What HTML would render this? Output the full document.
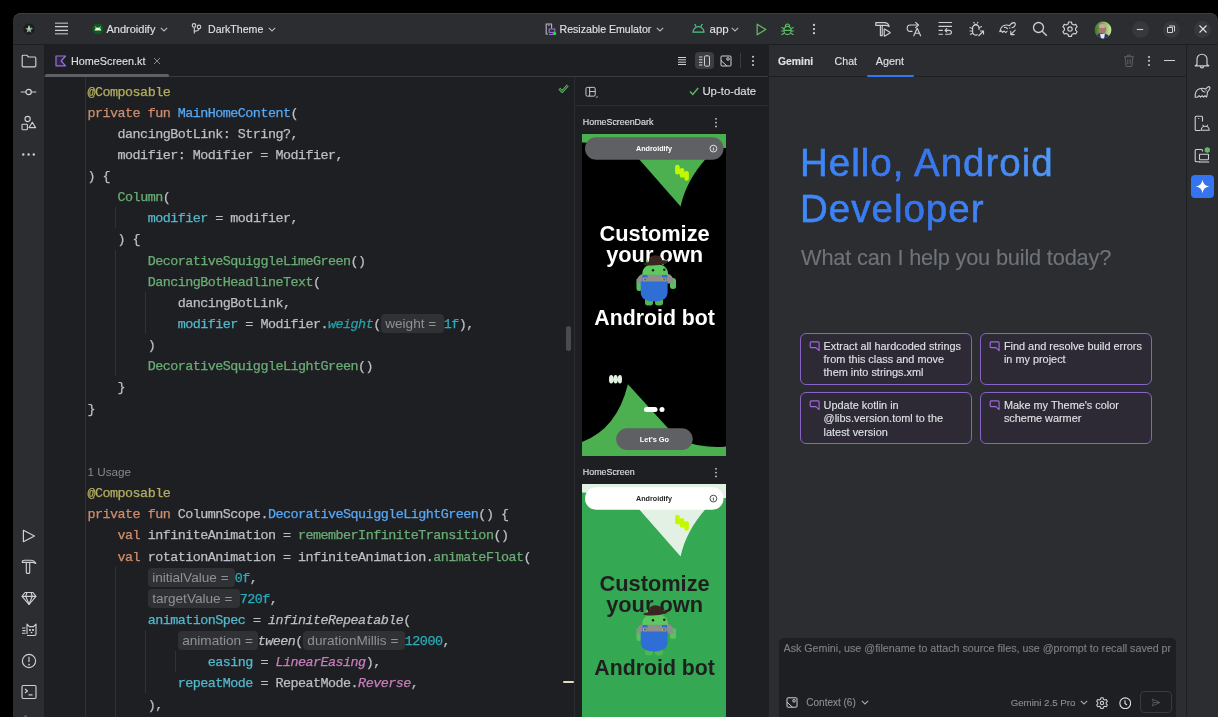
<!DOCTYPE html>
<html><head><meta charset="utf-8">
<style>
*{box-sizing:border-box;margin:0;padding:0}
html,body{width:1218px;height:717px;overflow:hidden;background:#000}
body{will-change:transform}
body{font-family:"Liberation Sans",sans-serif;color:#DFE1E5;position:relative}
div,span,svg{position:absolute}
span{position:static}
.ln span, .t span{position:static}
#win{left:13px;top:13px;width:1205px;height:704px;background:#2B2D30;border-radius:8px 8px 0 0;overflow:hidden;box-shadow:inset 0 1px 0 #3A3C40}
#tabs{left:44px;top:44px;width:724px;height:32px;background:#1E1F22}
#tabline{left:44px;top:76px;width:724px;height:1px;background:#393B40}
#code{left:44px;top:77px;width:530px;height:640px;background:#1E1F22}
#prev{left:574px;top:77px;width:194px;height:640px;background:#1E1F22;border-left:1px solid #393B40}
#gemsep{left:768px;top:44px;width:1px;height:673px;background:#1E1F22}
#rsep{left:1186px;top:44px;width:1px;height:673px;background:#1E1F22}
.ln{left:0;width:574px;height:21px;white-space:pre;font-family:"Liberation Mono",monospace;font-size:13.4px;letter-spacing:-0.52px;line-height:21px;color:#BCBEC4;padding-left:87.5px;-webkit-text-stroke:0.25px}
.kw{color:#CF8E6D}.an{color:#B3AE60}.fd{color:#56A8F5}.cp{color:#69AC74}.na{color:#53B7CD}.nu{color:#2AACB8}.it{font-style:italic}.pu{color:#C77DBB}.tl{color:#20A4A8}
.hint{display:inline-block;position:relative !important;font-family:"Liberation Sans",sans-serif;font-size:13.6px;letter-spacing:0;-webkit-text-stroke:0;color:#8E9196;background:#303135;border-radius:4px;padding:0 0 0 4.5px;line-height:19px;height:19.2px;vertical-align:top;margin-top:-.2px;overflow:hidden}
.usage{display:inline-block;transform:translateY(-0.9px);font-family:"Liberation Sans",sans-serif;font-size:11.7px;letter-spacing:0;-webkit-text-stroke:0;color:#868A91}
.ig{width:1px;background:#313235}
.t{white-space:nowrap;-webkit-text-stroke:0.12px}
.card{border:1.3px solid #8862C4;border-radius:6px;background:#2E2A35}
.ct{white-space:nowrap;font-size:10.9px;line-height:13.4px;color:#DFE1E5;-webkit-text-stroke:0.12px}

</style></head><body>
<div id="win"></div>
<div id="tline" style="left:13px;top:44px;width:1205px;height:1px;background:#1E1F22"></div>
<div id="tabs"></div>
<div id="tabline"></div>
<div id="code"></div>
<div id="prev"></div>
<div id="gemsep"></div>
<div id="rsep"></div>
<!-- title bar -->
<svg style="left:23px;top:23px" width="12" height="12" viewBox="0 0 12 12"><circle cx="6" cy="6" r="5.6" fill="#1B1C1E"/><path d="M6 2 L7 5 L9.8 5.2 L7.6 7 L8.5 9.8 L6 8.2 L3.5 9.8 L4.4 7 L2.2 5.2 L5 5z" fill="#9EA1A6"/><path d="M6 2 L7 5 L6 8.2 L5 5z" fill="#C8CACE"/><circle cx="8.3" cy="5.6" r="1.15" fill="#2ECC55"/></svg>
<svg style="left:54px;top:22px" width="15" height="13" viewBox="0 0 15 13"><g stroke="#CED0D6" stroke-width="1.3"><path d="M1 1.2H14" stroke="#A8ABB0"/><path d="M1 4.6H14"/><path d="M1 8.4H14"/><path d="M1 11.8H14" stroke="#A8ABB0"/></g></svg>
<svg style="left:91.5px;top:22.5px" width="12" height="12" viewBox="0 0 12 12"><path d="M6 0.3l1.6 1 1.9-.1.6 1.8 1.5 1.2-.6 1.8.6 1.8-1.5 1.2-.6 1.8-1.9-.1-1.6 1-1.6-1-1.9.1-.6-1.8L.3 7.8l.6-1.8L.3 4.2l1.5-1.2.6-1.8 1.9.1z" fill="#0D5C1C"/><path d="M2.7 7.6Q2.9 4.6 5.9 4.4 8.9 4.6 9.1 7.6z" fill="#EAF5D5"/><path d="M3.3 3.6L4.3 5M8.5 3.6L7.5 5" stroke="#EAF5D5" stroke-width=".9"/></svg>
<div class="t" style="left:106.5px;top:22px;font-size:11px;color:#DFE1E5;line-height:14px">Androidify</div>
<svg style="left:160px;top:26.8px" width="8" height="5" viewBox="0 0 8 5"><path d="M.8.8L4 4 7.2.8" fill="none" stroke="#B6B9BE" stroke-width="1.1"/></svg>
<svg style="left:191px;top:22px" width="12" height="13" viewBox="0 0 12 13"><g fill="none" stroke="#CED0D6" stroke-width="1.1"><circle cx="3" cy="3.4" r="1.75"/><circle cx="8" cy="4.9" r="1.75"/><path d="M3.3 5.2V11.6M8 6.7Q8 8.9 3.5 9.1"/></g></svg>
<div class="t" style="left:208px;top:22px;font-size:10.6px;color:#DFE1E5;line-height:14px">DarkTheme</div>
<svg style="left:268px;top:26.8px" width="8" height="5" viewBox="0 0 8 5"><path d="M.8.8L4 4 7.2.8" fill="none" stroke="#B6B9BE" stroke-width="1.1"/></svg>

<svg style="left:545px;top:22px" width="12" height="14" viewBox="0 0 12 14"><g fill="none" stroke-width="1.1"><path d="M3 12H1.2V2H6.6V6.5" stroke="#B6B9BE"/><path d="M3 3.3h1.6" stroke="#B6B9BE"/><rect x="4.2" y="7" width="5.6" height="3.4" stroke="#9C6FDC"/><path d="M4 12.5h4" stroke="#9C6FDC"/></g><circle cx="9.6" cy="11.6" r="1.7" fill="#22E03A"/></svg>
<div class="t" style="left:559.5px;top:22px;font-size:10.6px;color:#DFE1E5;line-height:14px">Resizable Emulator</div>
<svg style="left:656px;top:26.8px" width="8" height="5" viewBox="0 0 8 5"><path d="M.8.8L4 4 7.2.8" fill="none" stroke="#B6B9BE" stroke-width="1.1"/></svg>
<svg style="left:692px;top:23px" width="13" height="10" viewBox="0 0 13 10"><g fill="none" stroke="#4FC582" stroke-width="1.2"><path d="M1 9.2a5.5 5.5 0 0 1 11 0z"/><path d="M2.6 1l1.6 2.6M10.4 1L8.8 3.6"/></g></svg>
<div class="t" style="left:709.5px;top:22px;font-size:11.5px;color:#DFE1E5;line-height:14px">app</div>
<svg style="left:731.3px;top:27.3px" width="8" height="5" viewBox="0 0 8 5"><path d="M.8.8L4 4 7.2.8" fill="none" stroke="#B6B9BE" stroke-width="1.1"/></svg>
<svg style="left:756px;top:22.6px" width="11" height="13" viewBox="0 0 11 13"><path d="M1.2 1.2L9.8 6.5 1.2 11.8z" fill="none" stroke="#5FB865" stroke-width="1.3" stroke-linejoin="round"/></svg>
<svg style="left:781px;top:22.5px" width="13" height="12.5" viewBox="0 0 13 12.5"><g fill="none" stroke="#5FB865" stroke-width="1.15" stroke-linecap="round"><ellipse cx="6.5" cy="7.5" rx="3.6" ry="4.1"/><path d="M4.3 3.6Q4.5 1 6.5 1 8.5 1 8.7 3.6"/><path d="M.8 4.5l2.2 1.2M12.2 4.5L10 5.7M.6 8h2.3M12.4 8h-2.3M.9 11.6l2.3-1.4M12.1 11.6l-2.3-1.4M2.9 7.4h7.2"/></g></svg>
<svg style="left:812.3px;top:22px" width="4" height="14" viewBox="0 0 4 14"><g fill="#CED0D6"><circle cx="2" cy="2.9" r="1.1"/><circle cx="2" cy="7.1" r="1.1"/><circle cx="2" cy="11.2" r="1.1"/></g></svg>

<svg style="left:875px;top:21px" width="17" height="17" viewBox="0 0 17 17"><g fill="none" stroke="#CED0D6" stroke-width="1.15" stroke-linejoin="round"><path d="M0.8 1.6H9.5Q13 1.6 14.2 5.4 12.5 4.4 10.5 4.4H0.8z"/><path d="M5.4 4.6V14.6H7.2V4.6"/><path d="M9.2 8.6q0-.8.7-.4l5 3q.7.4 0 .8l-5 3q-.7.4-.7-.4z"/></g></svg>
<svg style="left:906px;top:21px" width="16" height="16" viewBox="0 0 16 16"><g fill="none" stroke="#CED0D6" stroke-width="1.15" stroke-linejoin="round" stroke-linecap="round"><path d="M6 10.4H4.2Q1.2 10.4 1.2 7.2 1.2 4 4.2 4H12.2"/><path d="M9.6 1.4L12.4 4 9.6 6.6"/><path d="M7.8 14.8L11.2 7.2 14.6 14.8M9 12.2H13.4"/></g></svg>
<svg style="left:937px;top:21px" width="16" height="16" viewBox="0 0 16 16"><g fill="none" stroke="#CED0D6" stroke-width="1.15" stroke-linejoin="round" stroke-linecap="round"><path d="M2 1.5H14.5M2 5.4H14.5M2 9.3H5.5M2 13.2H5.5"/><path d="M8.2 9.3H12.2Q14.4 9.3 14.4 11.25 14.4 13.2 12.2 13.2H8.6"/><path d="M9.8 7.6L8.1 9.3 9.8 11"/></g></svg>
<svg style="left:969px;top:21px" width="16" height="16" viewBox="0 0 16 16"><g fill="none" stroke="#CED0D6" stroke-width="1.15"><path d="M10 9V7a3.2 3.2 0 0 0-6.4 0v4a3.2 3.2 0 0 0 5 2.6"/><path d="M5 4.5Q6.8 2 8.6 4.5M5.5 2.5L4.5 1M8.1 2.5L9.1 1"/><path d="M.6 6.5l3 1M.6 10h3M1 13.5l2.7-1.3M10 6.5l3-1"/><path d="M9.5 15l5-5M11 10h3.5v3.5"/></g></svg>
<svg style="left:999px;top:21px" width="18" height="16" viewBox="0 0 18 16"><g fill="none" stroke="#CED0D6" stroke-width="1.1" stroke-linejoin="round" stroke-linecap="round"><path d="M1 10.6Q1.5 6 5 4.5 8 3.5 10.5 4.8 12.5 1.5 15 1.6 17 2.2 16 4.5 15.2 6.4 13 6.8"/><path d="M1 10.6L2.4 9.8 3.6 11.4 5.2 10 6.6 11.6 8 10.4"/><path d="M5.5 6.5Q7.5 6 8.5 7.8M10.8 6.8v.5"/><path d="M16.2 9.2L11.8 13.6M11.8 10.2V13.6H15.2"/></g></svg>
<svg style="left:1032px;top:21px" width="16" height="16" viewBox="0 0 16 16"><g fill="none" stroke="#CED0D6" stroke-width="1.3"><circle cx="6.5" cy="6.5" r="5"/><path d="M10.2 10.2L14.8 14.8"/></g></svg>
<svg style="left:1062px;top:21px" width="16" height="16" viewBox="0 0 16 16"><g fill="none" stroke="#CED0D6" stroke-width="1.15" stroke-linejoin="round"><path d="M6.6 1h2.8l.5 2 1.8 1 2-.6 1.4 2.4-1.5 1.4v2l1.5 1.4-1.4 2.4-2-.6-1.8 1-.5 2H6.6l-.5-2-1.8-1-2 .6L.9 10.6l1.5-1.4v-2L.9 5.8l1.4-2.4 2 .6 1.8-1z"/><circle cx="8" cy="8" r="2.2"/></g></svg>
<svg style="left:1094px;top:20.5px" width="18" height="18" viewBox="0 0 18 18"><defs><clipPath id="av"><circle cx="9" cy="9" r="8.4"/></clipPath><linearGradient id="avg" x1="0" x2="1"><stop offset="0" stop-color="#3F6E28"/><stop offset=".6" stop-color="#8DBB60"/><stop offset="1" stop-color="#D2EAA8"/></linearGradient></defs><g clip-path="url(#av)"><rect width="18" height="18" fill="url(#avg)"/><ellipse cx="8.4" cy="8.6" rx="3.8" ry="5" fill="#A8786A"/><ellipse cx="8.4" cy="5" rx="3.4" ry="2" fill="#C9A8A8"/><path d="M1.5 18l2.5-5q2.5-1.5 4.5-.5l1 5.5z" fill="#2A3370"/><path d="M9.5 18l.5-5.5q3 0 5 2.5l1 3z" fill="#2A3370"/><path d="M6 12.6q2.5 1 5 0l-1 5.4h-3z" fill="#E0E8F0"/></g></svg>
<div style="left:1131.5px;top:20.5px;width:17px;height:17px;border-radius:50%;background:#36383C"></div>
<svg style="left:1135px;top:24px" width="10" height="10" viewBox="0 0 10 10"><path d="M1.8 5.5h6.4" stroke="#CED0D6" stroke-width="1.1"/></svg>
<div style="left:1162.5px;top:20.5px;width:17px;height:17px;border-radius:50%;background:#36383C"></div>
<svg style="left:1166px;top:24px" width="10" height="10" viewBox="0 0 10 10"><g fill="none" stroke="#CED0D6" stroke-width="1"><path d="M1.5 3.5h5v5h-5z"/><path d="M3 2h5.5v5.5"/></g></svg>
<div style="left:1194px;top:20.5px;width:17px;height:17px;border-radius:50%;background:#36383C"></div>
<svg style="left:1197.5px;top:24px" width="10" height="10" viewBox="0 0 10 10"><path d="M1.5 1.5l7 7M8.5 1.5l-7 7" stroke="#DFE1E5" stroke-width="1.1"/></svg>

<!-- tab row -->
<svg style="left:55px;top:55px" width="12" height="12" viewBox="0 0 12 12"><path d="M1 1h9.5L6.2 6l4.3 4.8H1z" fill="#2C2640" stroke="#9B6FE0" stroke-width="1.2" stroke-linejoin="round"/></svg>
<div class="t" style="left:71px;top:54px;font-size:10.8px;color:#DFE1E5;line-height:14px;-webkit-text-stroke:0.1px #DFE1E5">HomeScreen.kt</div>
<svg style="left:153px;top:56.5px" width="8" height="8" viewBox="0 0 8 8"><path d="M1 1l6 6M7 1L1 7" stroke="#868A91" stroke-width="1"/></svg>
<div style="left:45px;top:74.2px;width:124px;height:3px;border-radius:2px;background:#5E6065"></div>
<svg style="left:677px;top:56px" width="10" height="10" viewBox="0 0 10 10"><g stroke="#CED0D6" stroke-width="1"><path d="M1 1.5h8M1 3.8h8M1 6.2h8M1 8.5h8"/></g></svg>
<div style="left:695px;top:52px;width:19px;height:17px;border-radius:4px;background:#3C3E42"></div>
<svg style="left:698px;top:55px" width="13" height="12" viewBox="0 0 13 12"><g fill="none" stroke="#CED0D6" stroke-width="1"><path d="M1 2h3.5M1 4.7h3.5M1 7.3h3.5M1 10h3.5"/><rect x="6.5" y="0.8" width="5" height="10.4" rx="1.3"/></g></svg>
<svg style="left:720px;top:55px" width="12" height="12" viewBox="0 0 12 12"><g fill="none" stroke="#CED0D6" stroke-width="1"><rect x="1" y="1" width="10" height="10" rx="1"/><path d="M1 5.5L7 11"/><circle cx="8" cy="4" r="1.3"/></g></svg>
<div style="left:740px;top:53px;width:1px;height:15px;background:#393B40"></div>
<svg style="left:751px;top:55px" width="4" height="12" viewBox="0 0 4 12"><g fill="#CED0D6"><circle cx="2" cy="1.7" r="1"/><circle cx="2" cy="5.9" r="1"/><circle cx="2" cy="10" r="1"/></g></svg>

<!-- left strip -->
<svg style="left:21px;top:54px" width="16" height="14" viewBox="0 0 16 14"><path d="M1.2 2.2q0-1 1-1h3.6l1.6 1.8h6.4q1 0 1 1v7.8q0 1-1 1H2.2q-1 0-1-1z" fill="none" stroke="#CED0D6" stroke-width="1.15" stroke-linejoin="round"/></svg>
<svg style="left:20px;top:86px" width="17" height="12" viewBox="0 0 17 12"><g fill="none" stroke="#CED0D6" stroke-width="1.2"><circle cx="8.6" cy="6" r="2.7"/><path d="M.8 6h5.1M11.3 6h5"/></g></svg>
<svg style="left:21px;top:115px" width="16" height="16" viewBox="0 0 16 16"><g fill="none" stroke="#CED0D6" stroke-width="1.1" stroke-linejoin="round"><circle cx="6.6" cy="4" r="2.6"/><rect x="1" y="9.3" width="5.4" height="5.4" rx=".8"/><path d="M11.3 7.2l3.3 5.4H8z"/></g></svg>
<svg style="left:21px;top:152px" width="16" height="5" viewBox="0 0 16 5"><g fill="#CED0D6"><circle cx="2.3" cy="2.5" r="1.2"/><circle cx="7.6" cy="2.5" r="1.2"/><circle cx="12.8" cy="2.5" r="1.2"/></g></svg>

<svg style="left:21px;top:529px" width="16" height="14" viewBox="0 0 16 14"><path d="M2.4 1.3L13.5 7 2.4 12.7z" fill="none" stroke="#CED0D6" stroke-width="1.2" stroke-linejoin="round"/></svg>
<svg style="left:21px;top:559px" width="16" height="16" viewBox="0 0 16 16"><g fill="none" stroke="#CED0D6" stroke-width="1.15" stroke-linejoin="round"><path d="M1.3 3.2q0-2 2-2h6.5q3.5 0 5 3.2-1.8-1-3.6-1H1.3z"/><path d="M5.3 3.4v10.2q0 .8.8.8h1.8q.8 0 .8-.8V3.4"/></g></svg>
<svg style="left:21px;top:591px" width="16" height="15" viewBox="0 0 16 15"><g fill="none" stroke="#CED0D6" stroke-width="1.15" stroke-linejoin="round"><path d="M4 1.5h8l3 3.8-7 8.2-7-8.2z"/><path d="M1 5.3h14M5.8 1.5L4.8 5.3 8 13.5l3.2-8.2-1-3.8"/></g></svg>
<svg style="left:21px;top:622px" width="16" height="15" viewBox="0 0 16 15"><g fill="none" stroke="#CED0D6" stroke-width="1.1" stroke-linejoin="round"><path d="M6 13.5h7.5q1.5 0 1.5-1.5V2l-2.4 2.6H8.4L6 2v10"/><path d="M1 6h3.5M1.5 8.6H4.5M1 11.2h3.5"/><circle cx="9" cy="8" r=".5" fill="#CED0D6"/><circle cx="12" cy="8" r=".5" fill="#CED0D6"/><path d="M9.8 10.2l.7.6.7-.6"/></g></svg>
<svg style="left:21px;top:653px" width="16" height="16" viewBox="0 0 16 16"><g fill="none" stroke="#CED0D6" stroke-width="1.15"><circle cx="8" cy="8" r="6.6"/><path d="M8 3.8v5.3"/></g><circle cx="8" cy="11.6" r=".9" fill="#CED0D6"/></svg>
<svg style="left:21px;top:684px" width="16" height="16" viewBox="0 0 16 16"><g fill="none" stroke="#CED0D6" stroke-width="1.15" stroke-linejoin="round"><rect x="1" y="1.5" width="14" height="13" rx="1.2"/><path d="M4 5l2.5 2L4 9M7.5 10.8h4"/></g></svg>

<!-- right strip -->
<svg style="left:1194px;top:52px" width="16" height="17" viewBox="0 0 16 17"><g fill="none" stroke="#CED0D6" stroke-width="1.15" stroke-linejoin="round"><path d="M3 12.6V7.2a5 5 0 0 1 10 0v5.4l1.8 1.2H1.2z"/><path d="M6.4 14.3a1.6 1.6 0 0 0 3.2 0"/></g></svg>
<svg style="left:1194px;top:85px" width="17" height="14" viewBox="0 0 17 14"><g fill="none" stroke="#CED0D6" stroke-width="1.1" stroke-linejoin="round" stroke-linecap="round"><path d="M1.2 12.2Q.6 5.6 5.6 3.8 9 2.6 11.6 4.2L13.6 2.2Q15.4 .9 15.9 2.6 16.2 4.4 14.6 5.4 13.2 6.6 13.2 9.5L12.6 12.2 11 10.6 9.6 12.2 8.1 10.7 6.6 12.2 5.1 10.7 3.4 12.2z"/><path d="M7.6 4.4Q8.4 7 11 7"/></g><circle cx="12.2" cy="5.6" r=".55" fill="#CED0D6"/></svg>
<svg style="left:1194px;top:115px" width="16" height="17" viewBox="0 0 16 17"><g fill="none" stroke="#CED0D6" stroke-width="1.1" stroke-linejoin="round"><path d="M6.5 15.5H2.2q-1 0-1-1V2.2q0-1 1-1h5.3q1 0 1 1v4.3"/><path d="M4.2 3.5h1"/><path d="M7.2 15.3a4 4 0 0 1 8 0z"/><path d="M8.6 9.8l1 1.4M13.8 9.8l-1 1.4"/></g></svg>
<svg style="left:1194px;top:146px" width="17" height="18" viewBox="0 0 17 18"><g fill="none" stroke="#CED0D6" stroke-width="1.1" stroke-linejoin="round"><path d="M6 15.8H2.2q-1 0-1-1V4.5q0-1 1-1h5.3q1 0 1 1v1"/><rect x="5.5" y="8.2" width="9" height="5.5" rx=".6"/><path d="M5 16h10.2"/></g><circle cx="13.3" cy="4" r="2.7" fill="#5FB865"/></svg>
<div style="left:1191px;top:174.5px;width:23px;height:23px;border-radius:4px;background:#3574F0"></div>
<svg style="left:1195px;top:178.5px" width="15" height="15" viewBox="0 0 15 15"><path d="M7.5 0.8Q8.3 6.7 14.2 7.5 8.3 8.3 7.5 14.2 6.7 8.3 0.8 7.5 6.7 6.7 7.5 0.8z" fill="#fff"/></svg>

<svg style="left:23px;top:713px" width="5" height="4" viewBox="0 0 5 4"><circle cx="2.5" cy="3.5" r="1.6" fill="#55585D"/></svg>

<!-- indent guides -->
<div class="ig" style="left:85px;top:77px;height:640px"></div>
<div class="ig" style="left:115px;top:207.3px;height:21.1px"></div>
<div class="ig" style="left:115px;top:249.6px;height:126.8px"></div>
<div class="ig" style="left:145px;top:291.9px;height:42.3px"></div>
<div class="ig" style="left:115px;top:566.5px;height:151px"></div>
<div class="ig" style="left:145px;top:629.9px;height:63.4px"></div>
<div class="ig" style="left:175px;top:651px;height:21.1px"></div>
<!-- check -->
<svg style="left:558px;top:84px" width="11" height="9" viewBox="0 0 11 9"><path d="M1.3 4.6l2.9 3L9.8 1.4" fill="none" stroke="#5FB865" stroke-width="2.6" stroke-linejoin="miter"/><path d="M1.3 4.6l2.9 3L9.8 1.4" fill="none" stroke="#1E1F22" stroke-width="0.9"/></svg>
<!-- scrollbar -->
<div style="left:566px;top:326.3px;width:5px;height:24.7px;border-radius:3px;background:#4A4B4F"></div>
<div style="left:563px;top:681px;width:11px;height:2px;border-radius:1px;background:#E5DAC0"></div>

<!-- preview panel -->
<div style="left:574px;top:77px;width:1px;height:640px;background:#2B2D30"></div>
<div style="left:575px;top:104.5px;width:193px;height:1px;background:#2B2D30"></div>
<svg style="left:584.5px;top:85.5px" width="13" height="12" viewBox="0 0 14 13"><g fill="none" stroke="#CED0D6" stroke-width="1.05"><rect x="1" y="1.5" width="10" height="9.5" rx="1.5"/><path d="M5 1.5v9.5M5 6h6"/></g><path d="M11.5 12.5h2v-2z" fill="#CED0D6"/></svg>
<svg style="left:689px;top:87px" width="10" height="9" viewBox="0 0 10 9"><path d="M1 4.5l2.8 3L9.2 1" fill="none" stroke="#5FB865" stroke-width="1.4"/></svg>
<div class="t" style="left:702.4px;top:84px;font-size:11.4px;color:#DFE1E5;line-height:14px;-webkit-text-stroke:0.1px #DFE1E5">Up-to-date</div>
<div class="t" style="left:582.8px;top:117px;font-size:8.9px;color:#DFE1E5;line-height:11px">HomeScreenDark</div>
<svg style="left:714px;top:117px" width="4" height="11" viewBox="0 0 4 11"><g fill="#CED0D6"><circle cx="2" cy="1.8" r=".9"/><circle cx="2" cy="5.6" r=".9"/><circle cx="2" cy="9.4" r=".9"/></g></svg>
<div class="t" style="left:582.8px;top:466.5px;font-size:8.9px;color:#DFE1E5;line-height:11px">HomeScreen</div>
<svg style="left:714px;top:466.5px" width="4" height="11" viewBox="0 0 4 11"><g fill="#CED0D6"><circle cx="2" cy="1.8" r=".9"/><circle cx="2" cy="5.6" r=".9"/><circle cx="2" cy="9.4" r=".9"/></g></svg>

<svg style="left:582px;top:134px" width="144" height="322" viewBox="0 0 144 322">
<rect width="144" height="322" fill="#000000"/>
<path d="M0 0H144V14L0 8.5z" fill="#4CAF50"/>
<path d="M56 24 H124.5 Q104 47 98.6 72.4 z" fill="#4CAF50"/>
<path d="M95.4 33.1V38.2M100 36.2V41.4M104.6 39.4V44.5M95.4 36L104.6 42" fill="none" stroke="#C2F800" stroke-width="4.6" stroke-linecap="round"/>
<rect x="3" y="3.2" width="138.5" height="22.5" rx="11.25" fill="#5F6063"/>
<text x="72" y="17.3" text-anchor="middle" font-family="Liberation Sans" font-weight="bold" font-size="7.2" fill="#FFFFFF">Androidify</text>
<circle cx="131.4" cy="14.6" r="3.4" fill="none" stroke="#FFFFFF" stroke-width=".8"/>
<path d="M131.4 13.5v3" stroke="#FFFFFF" stroke-width=".8"/>
<text x="72.6" y="106.9" text-anchor="middle" font-family="Liberation Sans" font-weight="bold" font-size="21.8" fill="#FFFFFF">Customize</text>
<text x="72.6" y="127.8" text-anchor="middle" font-family="Liberation Sans" font-weight="bold" font-size="21.8" fill="#FFFFFF">your own</text>
<g>
<path d="M54.5 147 Q54 144 57 144 Q60 144 60 147 V154.5 Q60 157 57.2 157 Q54.5 157 54.5 154.5z" fill="#58C35C"/>
<path d="M88 147 Q88 144 91 144 Q94 144 94 147 V152.5 Q94 155 91 155 Q88 155 88 152.5z" fill="#58C35C"/>
<path d="M63 165 h8 v4 q0 2.6 -4 2.6 q-4 0 -4 -2.6z M73 165 h8 v4 q0 2.6 -4 2.6 q-4 0 -4 -2.6z" fill="#4DB852"/>
<path d="M54.5 149.5 Q55 140.5 62 139.8 H85 Q91.5 140.5 92 149.5z" fill="#8E8F8C"/>
<path d="M58.7 147.5 H85.6 V158 Q85.6 167.4 72.1 167.4 Q58.7 167.4 58.7 158z" fill="#2F6ED4"/>
<path d="M60.5 141 h5 v7 h-5z M80 141 h5 v7 h-5z" fill="#2F6ED4"/>
<path d="M61.5 144 h3.5 v3 h-3.5z M80.5 144 h3.5 v3 h-3.5z" fill="none" stroke="#D8B040" stroke-width=".8"/>
<path d="M60.2 140.7 Q60.2 130 73.1 130 Q86.1 130 86.1 140.7z" fill="#5BC95F"/>
<path d="M66 130 l-1.2 -3.5 M81 130 l1.2 -3.5" stroke="#5BC95F" stroke-width="2" stroke-linecap="round"/>
<circle cx="71" cy="136.3" r="1.2" fill="#1a1a1a"/><circle cx="82.3" cy="135.8" r="1.2" fill="#1a1a1a"/>
<path d="M61.7 129.6 Q73 125 86 126.5 Q87 127.5 84 129.5 Q73 132.5 63 131 Q60.5 130.5 61.7 129.6z" fill="#3A2520"/>
<path d="M66.5 128.5 Q66.8 121.2 73.5 121.2 Q80 121.2 80.5 127.5z" fill="#3A2520"/>
</g>
<text x="72.6" y="191.4" text-anchor="middle" font-family="Liberation Sans" font-weight="bold" font-size="21.3" fill="#FFFFFF">Android bot</text>
<path d="M27 245 q0 -4 2.2 -4 q2.2 0 2.2 4 q0 -4 2.2 -4 q2.2 0 2.2 4 q0 -4 2.2 -4 q2 0 2 4 v1 q0 3.4 -2 3.4 q-2.2 0 -2.2 -3.4 q0 3.4 -2.2 3.4 q-2.2 0 -2.2 -3.4 q0 3.4 -2.2 3.4 q-2.2 0 -2.2 -3.4z" fill="#E0F0E0"/>
<path d="M0 308 Q35 295 45.9 250.3 L84 292 Q98 308 115 311 Q132 314 144 312.5 V322 H0z" fill="#4CAF50"/>
<rect x="62" y="272.9" width="13.5" height="5" rx="2.5" fill="#fff"/>
<circle cx="80" cy="275.4" r="2.5" fill="#fff"/>
<rect x="34.2" y="294.3" width="76.5" height="21.7" rx="10.85" fill="#5F6063"/>
<text x="72.5" y="308.2" text-anchor="middle" font-family="Liberation Sans" font-weight="bold" font-size="7.4" fill="#FFFFFF">Let's Go</text>
</svg>
<svg style="left:582px;top:483.6px" width="144" height="234" viewBox="0 0 144 234">
<rect width="144" height="322" fill="#34A853"/>
<path d="M0 0H144V14L0 8.5z" fill="#E3F1E4"/>
<path d="M56 24 H124.5 Q104 47 98.6 72.4 z" fill="#E3F1E4"/>
<path d="M95.4 33.1V38.2M100 36.2V41.4M104.6 39.4V44.5M95.4 36L104.6 42" fill="none" stroke="#C2F800" stroke-width="4.6" stroke-linecap="round"/>
<rect x="3" y="3.2" width="138.5" height="22.5" rx="11.25" fill="#FFFFFF"/>
<text x="72" y="17.3" text-anchor="middle" font-family="Liberation Sans" font-weight="bold" font-size="7.2" fill="#1F1F1F">Androidify</text>
<circle cx="131.4" cy="14.6" r="3.4" fill="none" stroke="#1F1F1F" stroke-width=".8"/>
<path d="M131.4 13.5v3" stroke="#1F1F1F" stroke-width=".8"/>
<text x="72.6" y="106.9" text-anchor="middle" font-family="Liberation Sans" font-weight="bold" font-size="21.8" fill="#1F1F1F">Customize</text>
<text x="72.6" y="127.8" text-anchor="middle" font-family="Liberation Sans" font-weight="bold" font-size="21.8" fill="#1F1F1F">your own</text>
<g>
<path d="M54.5 147 Q54 144 57 144 Q60 144 60 147 V154.5 Q60 157 57.2 157 Q54.5 157 54.5 154.5z" fill="#58C35C"/>
<path d="M88 147 Q88 144 91 144 Q94 144 94 147 V152.5 Q94 155 91 155 Q88 155 88 152.5z" fill="#58C35C"/>
<path d="M63 165 h8 v4 q0 2.6 -4 2.6 q-4 0 -4 -2.6z M73 165 h8 v4 q0 2.6 -4 2.6 q-4 0 -4 -2.6z" fill="#4DB852"/>
<path d="M54.5 149.5 Q55 140.5 62 139.8 H85 Q91.5 140.5 92 149.5z" fill="#8E8F8C"/>
<path d="M58.7 147.5 H85.6 V158 Q85.6 167.4 72.1 167.4 Q58.7 167.4 58.7 158z" fill="#2F6ED4"/>
<path d="M60.5 141 h5 v7 h-5z M80 141 h5 v7 h-5z" fill="#2F6ED4"/>
<path d="M61.5 144 h3.5 v3 h-3.5z M80.5 144 h3.5 v3 h-3.5z" fill="none" stroke="#D8B040" stroke-width=".8"/>
<path d="M60.2 140.7 Q60.2 130 73.1 130 Q86.1 130 86.1 140.7z" fill="#5BC95F"/>
<path d="M66 130 l-1.2 -3.5 M81 130 l1.2 -3.5" stroke="#5BC95F" stroke-width="2" stroke-linecap="round"/>
<circle cx="71" cy="136.3" r="1.2" fill="#1a1a1a"/><circle cx="82.3" cy="135.8" r="1.2" fill="#1a1a1a"/>
<path d="M61.7 129.6 Q73 125 86 126.5 Q87 127.5 84 129.5 Q73 132.5 63 131 Q60.5 130.5 61.7 129.6z" fill="#3A2520"/>
<path d="M66.5 128.5 Q66.8 121.2 73.5 121.2 Q80 121.2 80.5 127.5z" fill="#3A2520"/>
</g>
<text x="72.6" y="191.4" text-anchor="middle" font-family="Liberation Sans" font-weight="bold" font-size="21.3" fill="#1F1F1F">Android bot</text>
<path d="M27 245 q0 -4 2.2 -4 q2.2 0 2.2 4 q0 -4 2.2 -4 q2.2 0 2.2 4 q0 -4 2.2 -4 q2 0 2 4 v1 q0 3.4 -2 3.4 q-2.2 0 -2.2 -3.4 q0 3.4 -2.2 3.4 q-2.2 0 -2.2 -3.4 q0 3.4 -2.2 3.4 q-2.2 0 -2.2 -3.4z" fill="#E0F0E0"/>
<path d="M0 308 Q35 295 45.9 250.3 L84 292 Q98 308 115 311 Q132 314 144 312.5 V322 H0z" fill="#34A853"/>
<rect x="62" y="272.9" width="13.5" height="5" rx="2.5" fill="#fff"/>
<circle cx="80" cy="275.4" r="2.5" fill="#fff"/>
<rect x="34.2" y="294.3" width="76.5" height="21.7" rx="10.85" fill="#FFFFFF"/>
<text x="72.5" y="308.2" text-anchor="middle" font-family="Liberation Sans" font-weight="bold" font-size="7.4" fill="#1F1F1F">Let's Go</text>
</svg>
<!-- gemini panel -->
<div style="left:769px;top:76px;width:417px;height:1px;background:#1E1F22"></div>
<div class="t" style="left:778px;top:55px;font-size:10.4px;font-weight:bold;color:#DFE1E5;line-height:14px">Gemini</div>
<div class="t" style="left:834.6px;top:54px;font-size:10.6px;color:#DFE1E5;line-height:14px">Chat</div>
<div class="t" style="left:875.8px;top:54px;font-size:10.8px;color:#DFE1E5;line-height:14px">Agent</div>
<div style="left:867px;top:74.8px;width:46.5px;height:2.4px;border-radius:1px;background:#3574F0"></div>
<svg style="left:1123px;top:54px" width="12" height="13" viewBox="0 0 12 13"><g fill="none" stroke="#5A5D63" stroke-width="1.05" stroke-linejoin="round"><path d="M1 2.8h10M4.2 2.6q0-1.6 1.8-1.6t1.8 1.6M2.2 3l.8 8.8q.1.7.8.7h4.4q.7 0 .8-.7L9.8 3"/><path d="M4.8 5.2v5M7.2 5.2v5"/></g></svg>
<svg style="left:1147px;top:55px" width="4" height="12" viewBox="0 0 4 12"><g fill="#CED0D6"><circle cx="2" cy="1.9" r="1"/><circle cx="2" cy="5.8" r="1"/><circle cx="2" cy="9.9" r="1"/></g></svg>
<div style="left:1164.3px;top:60px;width:10.5px;height:1.2px;background:#CED0D6"></div>

<div class="t" style="left:800px;top:140.1px;font-size:38.5px;line-height:46px;letter-spacing:1px;background:linear-gradient(90deg,#3E8BFB 0%,#3472F0 45%,#5199F5 100%);-webkit-background-clip:text;background-clip:text;color:transparent;-webkit-text-stroke:0.45px rgba(70,140,250,0.55)">Hello, Android<br>Developer</div>
<div class="t" style="left:801px;top:245.1px;font-size:21.8px;line-height:25px;letter-spacing:-0.19px;color:#6F737A">What can I help you build today?</div>

<div class="card" style="left:800px;top:333.2px;width:172px;height:51.7px"></div>
<div class="card" style="left:980.3px;top:333.2px;width:171.9px;height:51.7px"></div>
<div class="card" style="left:800px;top:392.4px;width:172px;height:51.5px"></div>
<div class="card" style="left:980.3px;top:392.4px;width:171.9px;height:51.5px"></div>
<svg class="bub" style="left:808.5px;top:341px" width="11" height="11" viewBox="0 0 11 11"><path d="M2.2 .9H9.1Q10.1 .9 10.1 1.9V9.6L6.8 6.6H2.2Q1.2 6.6 1.2 5.6V1.9Q1.2 .9 2.2 .9z" fill="none" stroke="#9B6AD9" stroke-width="1.15" stroke-linejoin="round"/></svg>
<svg class="bub" style="left:988.8px;top:341px" width="11" height="11" viewBox="0 0 11 11"><path d="M2.2 .9H9.1Q10.1 .9 10.1 1.9V9.6L6.8 6.6H2.2Q1.2 6.6 1.2 5.6V1.9Q1.2 .9 2.2 .9z" fill="none" stroke="#9B6AD9" stroke-width="1.15" stroke-linejoin="round"/></svg>
<svg class="bub" style="left:808.5px;top:400.2px" width="11" height="11" viewBox="0 0 11 11"><path d="M2.2 .9H9.1Q10.1 .9 10.1 1.9V9.6L6.8 6.6H2.2Q1.2 6.6 1.2 5.6V1.9Q1.2 .9 2.2 .9z" fill="none" stroke="#9B6AD9" stroke-width="1.15" stroke-linejoin="round"/></svg>
<svg class="bub" style="left:988.8px;top:400.2px" width="11" height="11" viewBox="0 0 11 11"><path d="M2.2 .9H9.1Q10.1 .9 10.1 1.9V9.6L6.8 6.6H2.2Q1.2 6.6 1.2 5.6V1.9Q1.2 .9 2.2 .9z" fill="none" stroke="#9B6AD9" stroke-width="1.15" stroke-linejoin="round"/></svg>
<div class="ct" style="left:823.6px;top:339.5px">Extract all hardcoded strings<br>from this class and move<br>them into strings.xml</div>
<div class="ct" style="left:1003.9px;top:339.5px">Find and resolve build errors<br>in my project</div>
<div class="ct" style="left:823.6px;top:398.7px">Update kotlin in<br>@libs.version.toml to the<br>latest version</div>
<div class="ct" style="left:1003.9px;top:398.7px">Make my Theme's color<br>scheme warmer</div>

<div style="left:779px;top:637.9px;width:397px;height:90px;border-radius:5px;background:#1E1F22"></div>
<div class="t" style="left:783.5px;top:642.3px;width:390px;overflow:hidden;font-size:10.7px;line-height:12px;color:#7D8087">Ask Gemini, use @filename to attach source files, use @prompt to recall saved pr</div>
<svg style="left:786px;top:697px" width="12" height="11" viewBox="0 0 12 11"><g fill="none" stroke="#CED0D6" stroke-width="1"><rect x="1" y=".8" width="10" height="9.4" rx="1"/><path d="M1 5.2L6.5 10.2"/><circle cx="8" cy="3.8" r="1.3"/></g></svg>
<div class="t" style="left:806.3px;top:697px;font-size:10px;line-height:11px;color:#8C8F94">Context (6)</div>
<svg style="left:860.5px;top:700px" width="8" height="5" viewBox="0 0 8 5"><path d="M.8.8L4 4 7.2.8" fill="none" stroke="#A8ABB0" stroke-width="1.1"/></svg>
<div class="t" style="left:1010.7px;top:697px;font-size:9.7px;line-height:11px;color:#8C8F94">Gemini 2.5 Pro</div>
<svg style="left:1079.5px;top:700px" width="8" height="5" viewBox="0 0 8 5"><path d="M.8.8L4 4 7.2.8" fill="none" stroke="#A8ABB0" stroke-width="1.1"/></svg>
<svg style="left:1096px;top:696.5px" width="12" height="12" viewBox="0 0 16 16"><g fill="none" stroke="#CED0D6" stroke-width="1.4" stroke-linejoin="round"><path d="M6.6 1h2.8l.5 2 1.8 1 2-.6 1.4 2.4-1.5 1.4v2l1.5 1.4-1.4 2.4-2-.6-1.8 1-.5 2H6.6l-.5-2-1.8-1-2 .6L.9 10.6l1.5-1.4v-2L.9 5.8l1.4-2.4 2 .6 1.8-1z"/><circle cx="8" cy="8" r="2.2"/></g></svg>
<svg style="left:1118.5px;top:696.5px" width="12.5" height="12.5" viewBox="0 0 12.5 12.5"><g fill="none" stroke="#DFE1E5" stroke-width="1.1"><circle cx="6.25" cy="6.25" r="5.4"/><path d="M6 3.2v3.2l2 1.6"/></g></svg>
<div style="left:1140.2px;top:691px;width:31.6px;height:22.3px;border-radius:4px;border:1px solid #393B40"></div>
<svg style="left:1151px;top:698px" width="10" height="9" viewBox="0 0 10 9"><path d="M1 1l8 3.5-8 3.5 1.5-3.5z M2.5 4.5h6.5" fill="none" stroke="#55585E" stroke-width=".9" stroke-linejoin="round"/></svg>

<div class="ln" style="top:81.50px"><span class="an">@Composable</span></div>
<div class="ln" style="top:102.64px"><span class="kw">private fun </span><span class="fd">MainHomeContent</span>(</div>
<div class="ln" style="top:123.78px">    dancingBotLink: String?,</div>
<div class="ln" style="top:144.92px">    modifier: Modifier = Modifier,</div>
<div class="ln" style="top:166.06px">) {</div>
<div class="ln" style="top:187.20px">    <span class="cp">Column</span>(</div>
<div class="ln" style="top:208.34px">        <span class="na">modifier</span> = modifier,</div>
<div class="ln" style="top:229.48px">    ) {</div>
<div class="ln" style="top:250.62px">        <span class="cp">DecorativeSquiggleLimeGreen</span>()</div>
<div class="ln" style="top:271.76px">        <span class="cp">DancingBotHeadlineText</span>(</div>
<div class="ln" style="top:292.90px">            dancingBotLink,</div>
<div class="ln" style="top:314.04px">            <span class="na">modifier</span> = Modifier.<span class="it tl">weight</span>(<span class="hint" style="width:63px">weight =</span><span class="nu">1f</span>),</div>
<div class="ln" style="top:335.18px">        )</div>
<div class="ln" style="top:356.32px">        <span class="cp">DecorativeSquiggleLightGreen</span>()</div>
<div class="ln" style="top:377.46px">    }</div>
<div class="ln" style="top:398.60px">}</div>
<div class="ln" style="top:419.74px"></div>
<div class="ln" style="top:440.88px"></div>
<div class="ln" style="top:462.02px"><span class="usage">1 Usage</span></div>
<div class="ln" style="top:483.16px"><span class="an">@Composable</span></div>
<div class="ln" style="top:504.30px"><span class="kw">private fun </span>ColumnScope.<span class="fd">DecorativeSquiggleLightGreen</span>() {</div>
<div class="ln" style="top:525.44px">    <span class="kw">val </span>infiniteAnimation = <span class="cp">rememberInfiniteTransition</span>()</div>
<div class="ln" style="top:546.58px">    <span class="kw">val </span>rotationAnimation = infiniteAnimation.<span class="cp">animateFloat</span>(</div>
<div class="ln" style="top:567.72px">        <span class="hint" style="width:87px">initialValue =</span><span class="nu">0f</span>,</div>
<div class="ln" style="top:588.86px">        <span class="hint" style="width:92px">targetValue =</span><span class="nu">720f</span>,</div>
<div class="ln" style="top:610.00px">        <span class="na">animationSpec</span> = <span class="it">infiniteRepeatable</span>(</div>
<div class="ln" style="top:631.14px">            <span class="hint" style="width:80px">animation =</span><span class="it">tween</span>(<span class="hint" style="width:102px">durationMillis =</span><span class="nu">12000</span>,</div>
<div class="ln" style="top:652.28px">                <span class="na">easing</span> = <span class="it pu">LinearEasing</span>),</div>
<div class="ln" style="top:673.42px">            <span class="na">repeatMode</span> = RepeatMode.<span class="it pu">Reverse</span>,</div>
<div class="ln" style="top:694.56px">        ),</div>

</body></html>
